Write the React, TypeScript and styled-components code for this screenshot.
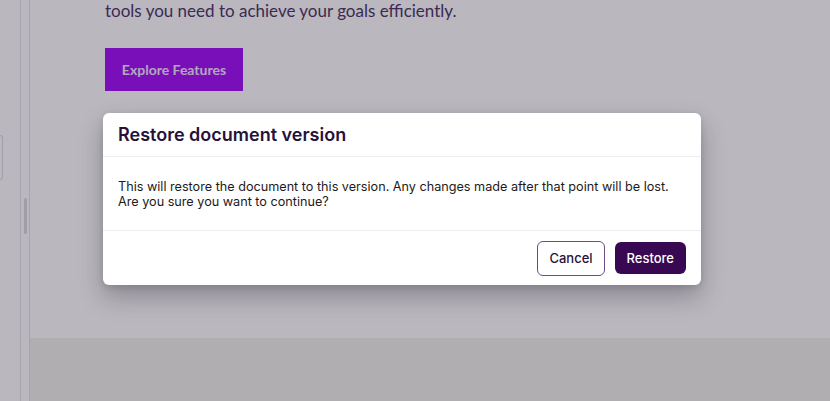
import React from 'react';
import styled, { createGlobalStyle } from 'styled-components';

const GlobalStyle = createGlobalStyle`
  html, body {
    margin: 0;
    padding: 0;
    height: 100%;
    overflow: hidden;
  }
  #root {
    height: 100%;
  }
`;

const Page = styled.div`
  display: flex;
  height: 401px;
  width: 830px;
  background: #ffffff;
  font-family: Inter, "Liberation Sans", sans-serif;
  position: relative;
  overflow: hidden;
`;

const SidePanel = styled.aside`
  width: 21px;
  border-right: 1px solid #e3e2e6;
  padding-top: 135px;
  box-sizing: border-box;
`;

const SideCard = styled.div`
  width: 2px;
  height: 43px;
  border: 1px solid #dcdbe0;
  border-left: none;
  border-radius: 0 4px 4px 0;
`;

const Handle = styled.div`
  width: 9px;
  border-right: 1px solid #e3e2e6;
  display: flex;
  justify-content: center;
  padding-top: 198px;
  box-sizing: border-box;
`;

const Grip = styled.div`
  width: 3px;
  height: 36px;
  border-radius: 2px;
  background: #d9d8dd;
`;

const Main = styled.main`
  flex: 1;
  display: flex;
  flex-direction: column;
`;

const Hero = styled.section`
  height: 338px;
  padding: 0 0 0 75px;
  box-sizing: border-box;
`;

const Lead = styled.p`
  margin: -1px 0 0;
  font-family: Lato, "Liberation Sans", sans-serif;
  font-size: 17px;
  line-height: 24px;
  color: #4b3368;
`;

const CtaButton = styled.button`
  display: block;
  margin-top: 25px;
  width: 138px;
  height: 43px;
  border: none;
  background: #a20df6;
  color: #f3e6fb;
  font-family: Lato, "Liberation Sans", sans-serif;
  font-weight: 700;
  font-size: 14px;
  cursor: pointer;
`;

const Footer = styled.footer`
  flex: 1;
  background: #f1f1ed;
`;

const Overlay = styled.div`
  position: absolute;
  inset: 0;
  background: rgba(28, 20, 40, 0.3);
`;

const Dialog = styled.div`
  position: absolute;
  left: 103px;
  top: 113px;
  width: 598px;
  background: #ffffff;
  border-radius: 6px;
  box-shadow: 0 12px 24px rgba(20, 15, 30, 0.28), 0 2px 6px rgba(20, 15, 30, 0.12);
  display: flex;
  flex-direction: column;
`;

const DialogHeader = styled.div`
  height: 43px;
  padding: 0 15px;
  display: flex;
  align-items: center;
  border-bottom: 1px solid #eeedf0;
`;

const Title = styled.h2`
  margin: 0;
  font-size: 18px;
  font-weight: 600;
  color: #26113a;
`;

const DialogBody = styled.div`
  height: 74px;
  padding: 0 15px;
  display: flex;
  align-items: center;
  border-bottom: 1px solid #eeedf0;
  box-sizing: border-box;
`;

const Message = styled.p`
  margin: 0;
  font-size: 12.65px;
  line-height: 15px;
  color: #1d1a22;
`;

const DialogFooter = styled.div`
  height: 54px;
  padding: 0 15px;
  display: flex;
  align-items: center;
  justify-content: flex-end;
  gap: 10px;
`;

const Button = styled.button<{ $primary?: boolean }>`
  height: ${(p) => (p.$primary ? '32px' : '35px')};
  padding: 0 ${(p) => (p.$primary ? '12px' : '11px')};
  border-radius: 6px;
  border: ${(p) => (p.$primary ? 'none' : '1px solid #6e4a86')};
  background: ${(p) => (p.$primary ? '#380852' : '#ffffff')};
  color: ${(p) => (p.$primary ? '#ffffff' : '#26113a')};
  font-family: Inter, "Liberation Sans", sans-serif;
  font-size: 13px;
  font-weight: 500;
  cursor: pointer;
`;

export default function App() {
  return (
    <>
      <GlobalStyle />
      <Page>
        <SidePanel>
          <SideCard />
        </SidePanel>
        <Handle>
          <Grip />
        </Handle>
        <Main>
          <Hero>
            <Lead>tools you need to achieve your goals efficiently.</Lead>
            <CtaButton>Explore Features</CtaButton>
          </Hero>
          <Footer />
        </Main>
        <Overlay />
        <Dialog role="dialog" aria-modal="true">
          <DialogHeader>
            <Title>Restore document version</Title>
          </DialogHeader>
          <DialogBody>
            <Message>
              This will restore the document to this version. Any changes made after that point will be lost.
              <br />
              Are you sure you want to continue?
            </Message>
          </DialogBody>
          <DialogFooter>
            <Button>Cancel</Button>
            <Button $primary>Restore</Button>
          </DialogFooter>
        </Dialog>
      </Page>
    </>
  );
}
